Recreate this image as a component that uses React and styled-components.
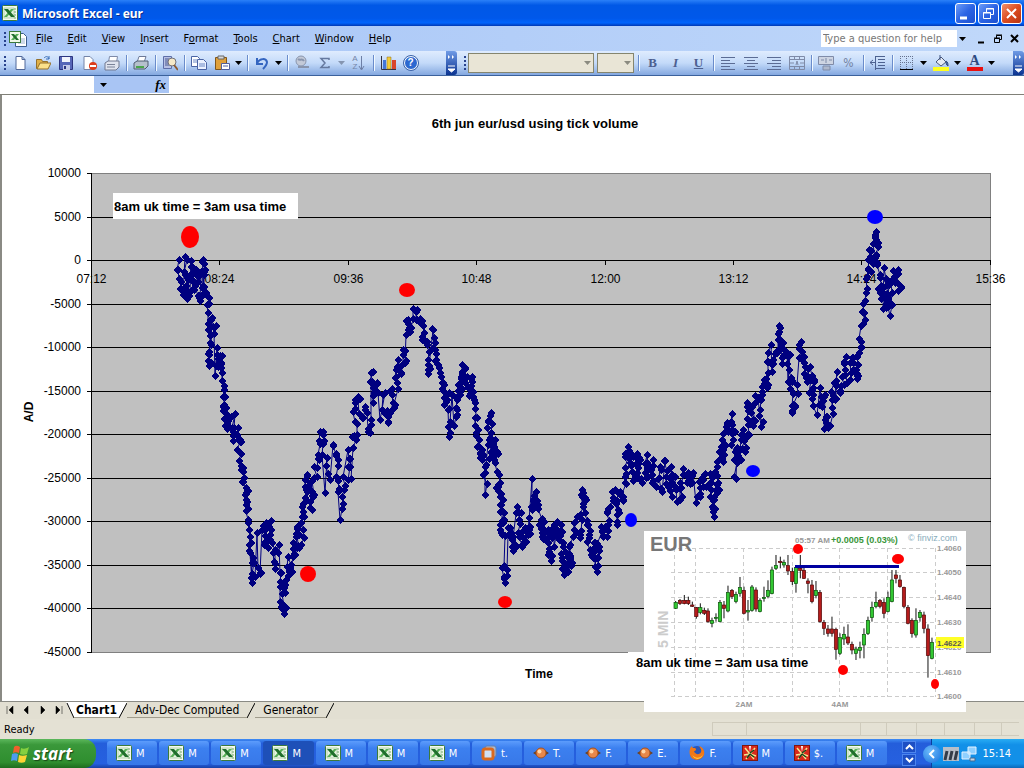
import React from "react";
import styled, { createGlobalStyle } from "styled-components";

const GlobalStyle = createGlobalStyle`
  * { box-sizing: border-box; }
  body {
    margin: 0;
    background: #fff;
    color: #000;
    font-family: "DejaVu Sans Condensed", "Noto Sans", sans-serif;
    font-size: 11px;
  }
  button, input, select { font: inherit; color: inherit; margin: 0; }
  button { padding: 0; border: none; background: none; }
`;

/* ---------- chart data ---------- */

const WAYPOINTS = [
  [179, 260], [179, 279], [181, 289], [183, 295], [185, 257], [185, 275], [187, 299], [188, 280],
  [191, 261], [190, 292], [193, 268], [194, 290], [196, 270], [198, 296], [200, 301], [201, 272],
  [203, 260], [202, 288], [205, 270], [203, 294], [207, 296], [207, 305], [208, 330], [209, 352], [209, 366],
  [211, 345], [212, 318], [213, 327], [214, 334], [215, 376], [217, 348], [218, 367], [220, 356],
  [221, 364], [222, 381], [223, 397], [224, 405], [226, 408], [226, 418], [227, 429], [231, 417],
  [233, 441], [235, 414], [234, 428], [237, 435], [239, 439], [238, 451], [241, 466], [242, 470],
  [243, 482], [246, 488], [245, 495], [247, 502], [246, 511], [248, 523], [249, 545], [250, 553],
  [252, 583], [253, 558], [255, 577], [257, 533], [258, 568], [260, 573], [262, 530], [264, 545],
  [266, 523], [268, 548], [271, 521], [270, 535], [272, 543], [275, 569], [275, 550], [279, 545],
  [280, 573], [282, 585], [281, 607], [284, 614], [285, 593], [286, 580], [288, 557], [289, 572],
  [292, 572], [293, 543], [293, 557], [296, 537], [297, 527], [299, 548], [303, 530], [302, 517],
  [302, 507], [305, 498], [305, 487], [307, 475], [310, 490], [312, 510], [313, 497], [314, 478],
  [317, 468], [318, 455], [320, 432], [323, 432], [322, 455], [325, 493], [327, 458], [330, 480],
  [333, 445], [336, 456], [336, 477], [338, 492], [340, 520], [342, 497], [343, 477], [348, 450],
  [348, 467], [351, 479], [353, 448], [354, 436], [355, 422], [355, 403], [360, 399], [362, 418],
  [365, 407], [368, 432], [371, 420], [371, 373], [372, 382], [373, 403], [377, 383], [378, 393],
  [380, 420], [385, 393], [384, 413], [388, 422], [390, 413], [392, 389], [394, 408], [397, 383],
  [396, 370], [398, 360], [401, 373], [403, 350], [405, 363], [406, 335], [408, 320], [410, 332],
  [413, 309], [417, 310], [416, 320], [420, 323], [422, 321], [422, 337], [426, 342], [429, 352],
  [428, 374], [429, 366], [433, 330], [435, 343], [436, 354], [438, 365], [440, 373], [442, 383],
  [443, 391], [444, 405], [447, 395], [448, 410], [449, 437], [450, 422], [452, 395], [454, 426],
  [456, 408], [457, 400], [458, 385], [460, 392], [461, 377], [463, 366], [462, 372], [465, 383],
  [467, 377], [469, 396], [472, 377], [473, 392], [475, 403], [475, 418], [476, 433], [479, 440],
  [480, 453], [482, 460], [482, 450], [485, 467], [485, 495], [485, 473], [488, 445], [488, 421],
  [490, 416], [491, 433], [489, 459], [493, 447], [495, 440], [493, 457], [497, 452], [497, 472],
  [498, 487], [498, 491], [503, 500], [500, 512], [500, 525], [504, 513], [501, 533], [505, 536],
  [504, 566], [505, 583], [507, 570], [508, 535], [510, 528], [512, 547], [515, 548], [513, 537],
  [517, 507], [519, 513], [518, 533], [522, 547], [525, 528], [526, 542], [529, 518], [528, 535],
  [532, 479], [532, 510], [536, 492], [535, 507], [538, 505], [541, 520], [542, 537], [544, 522],
  [545, 540], [548, 530], [549, 552], [551, 561], [552, 538], [554, 525], [554, 547], [557, 522],
  [559, 540], [561, 525], [563, 547], [562, 558], [564, 575], [567, 557], [568, 572], [569, 547],
  [572, 563], [573, 537], [577, 517], [576, 532], [580, 535], [580, 515], [583, 493], [585, 498],
  [585, 513], [587, 525], [589, 538], [591, 555], [593, 558], [594, 543], [597, 558], [597, 572],
  [599, 547], [601, 527], [603, 537], [605, 527], [607, 537], [607, 513], [610, 507], [612, 492],
  [615, 500], [617, 525], [618, 510], [620, 492], [623, 500], [625, 483], [625, 468], [628, 447],
  [627, 457], [633, 457], [630, 463], [633, 481], [637, 473], [635, 457], [639, 458], [642, 483],
  [645, 473], [647, 455], [648, 477], [653, 460], [652, 475], [656, 487], [660, 467], [662, 492],
  [665, 461], [666, 477], [668, 487], [671, 467], [672, 497], [675, 477], [677, 502], [680, 483],
  [681, 498], [683, 469], [687, 483], [688, 473], [692, 483], [693, 473], [696, 503], [700, 497],
  [702, 480], [704, 475], [706, 487], [710, 474], [710, 497], [712, 507], [714, 517], [714, 500],
  [716, 490], [718, 483], [717, 467], [720, 453], [721, 447], [723, 462], [725, 446], [724, 433],
  [727, 423], [728, 432], [732, 414], [732, 430], [733, 440], [734, 460], [736, 479], [737, 448],
  [740, 460], [741, 435], [743, 430], [745, 452], [747, 435], [747, 419], [747, 403], [751, 413],
  [753, 426], [755, 403], [758, 398], [761, 427], [760, 410], [762, 392], [764, 380], [767, 388],
  [768, 362], [771, 345], [772, 372], [773, 360], [776, 352], [778, 334], [779, 326], [780, 340],
  [782, 364], [783, 343], [787, 353], [788, 382], [790, 355], [789, 370], [792, 382], [793, 393],
  [792, 413], [795, 407], [797, 385], [799, 358], [801, 342], [802, 357], [805, 367], [807, 382],
  [810, 367], [809, 393], [814, 382], [813, 395], [817, 415], [820, 388], [822, 407], [825, 395],
  [824, 429], [827, 417], [830, 426], [832, 400], [834, 383], [835, 400], [837, 372], [840, 393],
  [842, 377], [846, 357], [847, 383], [850, 363], [853, 358], [853, 370], [857, 379], [858, 365],
  [859, 353], [861, 342], [863, 324], [864, 313], [866, 293], [867, 277], [871, 272], [868, 260],
  [871, 251], [873, 263], [876, 240], [876, 232], [878, 247], [877, 263], [880, 278], [881, 299],
  [883, 288], [884, 268], [883, 309], [886, 300], [888, 283], [888, 298], [890, 316], [892, 293],
  [893, 271], [895, 283], [898, 270], [899, 290], [901, 287],
];

// fill in the ticks between the turning points, with a small repeatable wobble
const buildSeries = (points) => {
  let seed = 7;
  const rand = () => {
    seed = (seed * 16807) % 2147483647;
    return seed / 2147483647 - 0.5;
  };
  const out = [points[0]];
  for (let i = 1; i < points.length; i++) {
    const [x0, y0] = points[i - 1];
    const [x1, y1] = points[i];
    if (Math.abs(y1 - y0) < 27) {
      [0.3, 0.7].forEach((t) => {
        out.push([
          Math.round(x0 + (x1 - x0) * t + rand() * 5),
          Math.round(y0 + (y1 - y0) * t + rand() * 10),
        ]);
      });
    }
    out.push([x1, y1]);
  }
  return out;
};

const SERIES = buildSeries(WAYPOINTS);
const LINE = SERIES.map((p) => p.join(",")).join(" ");
const MARKERS = SERIES.map(([x, y]) => `M${x - 4} ${y}l4 -4l4 4l-4 4z`).join("");

const Y_LABELS = [10000, 5000, 0, -5000, -10000, -15000, -20000, -25000, -30000, -35000, -40000, -45000];
const X_LABELS = ["07:12", "08:24", "09:36", "10:48", "12:00", "13:12", "14:24", "15:36"];
const yPos = (i) => Math.round(173 + i * 43.5) + 0.5;
const xPos = (i) => Math.round(91 + i * 128.4) + 0.5;

const DOTS = [
  [190, 237, 9, 11, "#f00"], [407, 290, 8, 7, "#f00"], [308, 574, 8, 8, "#f00"], [505, 602, 7, 6, "#f00"],
  [631, 520, 6, 7, "#00f"], [753, 471, 7, 6, "#00f"], [875, 217, 8, 7, "#00f"],
];

// x, high, low, body top, body bottom, rising
const CANDLES = [
  [152, 228, 252, 232, 250, 1], [165, 222, 240, 226, 236, 0], [178, 210, 238, 226, 236, 0], [190, 215, 240, 226, 236, 0],
  [202, 230, 246, 240, 244, 0], [214, 246, 281, 248, 275, 0], [226, 235, 268, 248, 262, 1], [238, 248, 270, 256, 265, 0],
  [249, 250, 293, 258, 290, 0], [261, 278, 307, 287, 295, 1], [273, 265, 290, 277, 280, 1], [285, 225, 292, 232, 290, 1],
  [297, 228, 280, 240, 250, 0], [309, 182, 262, 203, 258, 1], [321, 192, 222, 196, 215, 0], [333, 200, 235, 208, 230, 1],
  [345, 156, 215, 188, 205, 1], [357, 185, 268, 196, 265, 0], [369, 225, 287, 257, 261, 1], [381, 180, 260, 186, 256, 1],
  [393, 187, 260, 195, 252, 0], [405, 220, 262, 227, 260, 1], [417, 185, 230, 217, 221, 1], [429, 166, 220, 196, 214, 1],
  [441, 125, 208, 135, 206, 1], [453, 90, 135, 122, 130, 1], [466, 95, 130, 109, 113, 0], [477, 104, 128, 112, 120, 1],
  [489, 90, 150, 122, 138, 0], [502, 128, 180, 140, 170, 0], [513, 120, 203, 128, 176, 1], [526, 90, 160, 130, 136, 0],
  [537, 125, 162, 136, 160, 0], [549, 160, 205, 168, 175, 0], [561, 165, 235, 180, 230, 0], [573, 168, 220, 196, 212, 1],
  [585, 195, 293, 202, 290, 0], [597, 285, 330, 292, 310, 0], [609, 300, 335, 312, 325, 0], [621, 275, 335, 312, 325, 0],
  [633, 308, 404, 313, 373, 0], [645, 325, 390, 338, 385, 1], [657, 305, 360, 328, 342, 1], [669, 298, 360, 336, 354, 0],
  [681, 350, 388, 358, 375, 0], [693, 365, 405, 372, 385, 1], [705, 350, 400, 367, 376, 1], [717, 310, 400, 328, 360, 1],
  [729, 275, 330, 286, 326, 1], [741, 230, 290, 247, 278, 1], [753, 200, 250, 232, 245, 1], [765, 222, 250, 227, 244, 0],
  [777, 220, 280, 232, 265, 0], [789, 200, 262, 217, 260, 1], [801, 135, 232, 165, 230, 1], [813, 135, 175, 150, 160, 0],
  [825, 150, 188, 165, 185, 0], [837, 185, 250, 187, 244, 0], [849, 240, 298, 247, 295, 0], [861, 280, 338, 286, 326, 0],
  [873, 250, 338, 287, 330, 1], [885, 255, 290, 262, 278, 1], [897, 260, 325, 270, 310, 0], [909, 298, 458, 312, 392, 0],
  [921, 338, 403, 352, 400, 1],
];
const PRICES = [[17, "1.4060"], [41, "1.4050"], [66, "1.4640"], [91, "1.4630"], [116, "1.4620"], [141, "1.4610"], [165, "1.4600"]];

/* ---------- icons ---------- */

const ExcelIcon = ({ size = 16 }) => (
  <svg width={size} height={size} viewBox="0 0 16 16">
    <rect x="0.5" y="0.5" width="15" height="15" rx="1" fill="#f4faee" stroke="#3c7a3c" />
    <path d="M12 4h2M12 7h2M12 10h2M12 13h2" stroke="#6aa56a" />
    <rect x="2" y="3" width="10" height="10" fill="#e8f5e2" stroke="#8dbd8d" strokeWidth="0.6" />
    <path d="M12 4H9L2 12h3z" fill="#58b058" />
    <path d="M2 4h4l7 8H9z" fill="#1f6e2c" />
  </svg>
);
const WorkbookIcon = () => (
  <svg width="18" height="16" viewBox="0 0 18 16">
    <path d="M6.500 2.500h8l3 3v10h-11z" fill="#fff" stroke="#3c5c8c" />
    <path d="M9 8h7M9 10h7M9 12h7" stroke="#9cb0d0" />
    <rect x="0.500" y="0.500" width="11" height="11" fill="#eef8e8" stroke="#3c7a3c" />
    <path d="M10 3H7L2 9h3z" fill="#58b058" />
    <path d="M2 3h3l5 6H7z" fill="#1f6e2c" />
  </svg>
);
const OrangeSquare = () => (
  <svg width="16" height="16" viewBox="0 0 16 16">
    <rect x="4" y="1" width="11" height="11" rx="2" fill="#a9b9d2" stroke="#6880a8" />
    <rect x="2" y="4" width="10" height="10" rx="2" fill="#cfe0f5" stroke="#d96a20" strokeWidth="3" />
  </svg>
);
const OrangeBall = () => (
  <svg width="16" height="16" viewBox="0 0 16 16">
    <path d="M0 8l5-3v6zM16 8l-5-3v6z" fill="#684020" />
    <circle cx="8" cy="8" r="5" fill="#e8884a" stroke="#a8501c" />
    <circle cx="6.5" cy="6.5" r="2" fill="#ffd7a8" />
  </svg>
);
const Firefox = () => (
  <svg width="16" height="16" viewBox="0 0 16 16">
    <circle cx="8" cy="8" r="7" fill="#2a56b8" />
    <path d="M1 4c0-1 1-2 2-3 0 2 1 2 3 2 2 1 1 3-1 3 1 4 6 4 7 1 1-3-1-4-2-6 4 1 6 5 5 9-2 6-12 7-14 0-.6-2-.6-4 0-6z" fill="#f07818" />
    <path d="M3 9c2 5 9 5 11 0-1 6-9 7-11 0z" fill="#ffce40" />
  </svg>
);
const RedChart = () => (
  <svg width="16" height="16" viewBox="0 0 16 16">
    <rect x="0.5" y="0.5" width="15" height="15" fill="#d8281c" stroke="#7c1810" />
    <path d="M8 9L3 3M8 9l5-6M8 9L2 10M8 9l6 2M8 9l-4 5M8 9l4 5" stroke="#f4e890" strokeWidth="1.5" />
    <path d="M7 1l2 0-1 6z" fill="#fff" />
    <path d="M8 9l-3 4M8 9l4 3M8 8l4-3" stroke="#184018" strokeWidth="1.5" />
  </svg>
);
const TASK_ICONS = { x: ExcelIcon, s: OrangeSquare, b: OrangeBall, f: Firefox, r: RedChart };

const drawings = {
  new: <path d="M4 1.5h6l3 3v10H4zM10 1.5v3h3" fill="#fff" stroke="#51689a" />,
  open: (
    <>
      <path d="M1.5 13.5v-9h5l1 2h5v7z" fill="#e0b048" stroke="#94702c" />
      <path d="M2 14l3-6h11l-3 6z" fill="#fbe08a" stroke="#94702c" />
      <path d="M9 3c2-2 4-2 5 1M14 1v3h-3" fill="none" stroke="#3b6fb8" />
    </>
  ),
  save: (
    <>
      <path d="M1.5 1.5h13v13h-13z" fill="#5666b8" stroke="#2c3580" />
      <path d="M4 2h8v5H4z" fill="#f0f3fc" />
      <path d="M5 10h7v5H5z" fill="#c4cae8" />
      <path d="M6 11h2v3H6z" fill="#2c3580" />
    </>
  ),
  permission: (
    <>
      <path d="M3 1.5h6l3 3v10H3z" fill="#fff" stroke="#7484a8" />
      <circle cx="12" cy="11" r="4" fill="#dc3c1c" />
      <path d="M9 11h6" stroke="#fff" strokeWidth="2" />
    </>
  ),
  mail: (
    <>
      <path d="M5.500 1.500h8l-1 6h-8z" fill="#fff" stroke="#7e8aa8" />
      <path d="M1 8l3-2h11v6l-3 3H1z" fill="#dfe3ee" stroke="#707890" />
      <path d="M3 9.500h8M3 12h8" stroke="#7a8298" />
    </>
  ),
  print: (
    <>
      <path d="M6 1.500h7l-2 6H4z" fill="#fff" stroke="#6e7a98" />
      <path d="M1 8l3-2h11v5l-3 3H1z" fill="#b5c0cc" stroke="#4e5c70" />
      <path d="M3 11h8v2H3z" fill="#49a64c" />
    </>
  ),
  preview: (
    <>
      <path d="M1.500 1.500h8v12h-8z" fill="#b7c0e4" stroke="#5e6ea8" />
      <path d="M3 4h4M3 6h3M3 8h3M3 10h4" stroke="#4a5890" />
      <circle cx="10" cy="7" r="4" fill="#f6e9c8" stroke="#70727c" />
      <path d="M12 10l4 5" stroke="#8c5a30" strokeWidth="2" />
    </>
  ),
  copy: (
    <>
      <path d="M0.500 1.500h6l2 2v8h-8z" fill="#fff" stroke="#4a64a4" />
      <path d="M6.500 4.500h6l3 3v7h-9z" fill="#eaf1ff" stroke="#4a64a4" />
      <path d="M8 9h6M8 11h6M2 5h4M2 7h4" stroke="#6b88c4" />
    </>
  ),
  paste: (
    <>
      <path d="M1.500 2.500h11v12h-11z" fill="#dfa03a" stroke="#80561c" />
      <path d="M4 1h6v3H4z" fill="#d8d8d8" stroke="#666" />
      <path d="M7.500 8.500h8v6h-8z" fill="#fff" stroke="#5060a0" />
      <path d="M9 11h5" stroke="#5060a0" />
    </>
  ),
  undo: <path d="M3 3v6h6M3 8c3-5 9-5 10-1 0 3-2 5-4 7" fill="none" stroke="#3465c0" strokeWidth="2" />,
  link: (
    <>
      <circle cx="7" cy="6" r="5" fill="#c3cad8" stroke="#8995ad" />
      <path d="M4 12h5M8 12h7M4 4c2 2 4-1 6 2" stroke="#8995ad" strokeWidth="2" fill="none" />
    </>
  ),
  sum: <path d="M12 5V3.500H4l4 4.500-4 4.500h8V11" fill="none" stroke="#65799f" strokeWidth="1.500" />,
  chart: (
    <>
      <path d="M1.500 1v13.500H16" stroke="#334" fill="none" />
      <path d="M3 5h3v9H3z" fill="#4276d8" />
      <path d="M7 2h4v12H7z" fill="#f2cb38" stroke="#8a6818" strokeWidth="0.500" />
      <path d="M12 5h4v9h-4z" fill="#d8442c" />
    </>
  ),
  left: <path d="M1 2.500h14M1 5.500h9M1 8.500h14M1 11.500h9M1 14.500h14" stroke="#5b6c94" />,
  center: <path d="M1 2.500h14M4 5.500h8M1 8.500h14M4 11.500h8M1 14.500h14" stroke="#5b6c94" />,
  right: <path d="M1 2.500h14M6 5.500h9M1 8.500h14M6 11.500h9M1 14.500h14" stroke="#5b6c94" />,
  merge: <path d="M0.500 1.500h15v13h-15zM0.500 4.500h15M0.500 11.500h15M5.500 1.500v3M10.500 1.500v3M5.500 11.500v3M10.500 11.500v3M1 8h4M11 8h4M7 10l1-4 1 4" fill="none" stroke="#7f8ba8" />,
  currency: (
    <>
      <path d="M0.500 1.500h15v8h-15z" fill="#cdd4e2" stroke="#7f8ba8" />
      <path d="M3 5h3M8 3v5M11 5h3M5 11h7v4H5z" stroke="#7f8ba8" fill="#aeb8cc" />
    </>
  ),
  indent: <path d="M5 1.500h10M8 4.500h7M8 7.500h7M8 10.500h7M5 13.500h10M6 7.500H0M3 5L0 7.500 3 10M5.500 1v14" stroke="#4d6290" fill="none" />,
  borders: (
    <>
      <path d="M1.500 1v13M7.500 1v13M13.500 1v13M1 1.500h13M1 7.500h13" stroke="#65728f" strokeDasharray="1 1" />
      <path d="M1 14.500h13" stroke="#000" />
    </>
  ),
  fill: (
    <>
      <path d="M3 7l5-5 5 5-5 4z" fill="#e6ebf4" stroke="#4c5b7c" />
      <path d="M7 5V0M13 6c2 1 2 3 2 5-2-1-2-3-2-5z" fill="#3565b4" stroke="#3a5080" />
      <path d="M0 12h16v4H0z" fill="#ffff20" />
    </>
  ),
};

const Icon = ({ name }) => (
  <svg width="16" height="16" viewBox="0 0 16 16">{drawings[name]}</svg>
);
const Caret = ({ color = "#000" }) => (
  <svg width="7" height="4" viewBox="0 0 7 4"><path d="M0 0h7L3.500 4z" fill={color} /></svg>
);
const WindowsFlag = () => (
  <svg width="20" height="18" viewBox="0 0 20 18">
    <path d="M4 2c2-2 4-1 6 0L9 8C7 7 5 7 3 8z" fill="#f0602c" />
    <path d="M11 3c2 1 5 1 8-1l-2 7c-2 1-5 1-7 0z" fill="#86d040" />
    <path d="M2 9c2-1 4-1 6 0l-1 7c-2-1-4-1-6 0z" fill="#4c9cf0" />
    <path d="M9 10c2 1 5 1 8 0l-2 7c-2 1-5 1-7 0z" fill="#fcd434" />
  </svg>
);

/* ---------- toolbar pieces ---------- */

const Tool = ({ name, label, children }) => (
  <ToolButton type="button" aria-label={label || name}>
    {children || <Icon name={name} />}
  </ToolButton>
);
const DropArrow = ({ color }) => (
  <ArrowButton type="button" aria-label="More options"><Caret color={color} /></ArrowButton>
);
const More = () => (
  <Overflow type="button" aria-label="Toolbar options">
    <svg width="9" height="23" viewBox="0 0 9 23">
      <path d="M1 4l2 2-2 2zM5 4l2 2-2 2z" fill="#fff" />
      <path d="M1 15h7M1 18h7l-3.500 3z" stroke="#fff" fill="#fff" />
    </svg>
  </Overflow>
);

const MENUS = ["File", "Edit", "View", "Insert", "Format", "Tools", "Chart", "Window", "Help"];
const ACCEL = { Format: 1 };

const TASKS = [
  ["x", "M"], ["x", "M"], ["x", "M"], ["x", "M", true], ["x", "M"], ["x", "M"], ["x", "M"], ["s", "t."],
  ["b", "T."], ["b", "F."], ["b", "E."], ["f", "F."], ["r", "M"], ["r", "$."], ["x", "M"],
];

const MainChart = () => (
  <ChartSvg viewBox="2 95 1022 606" role="img" aria-label="6th jun eur/usd using tick volume">
    <text x="535" y="128" className="bold" textAnchor="middle">6th jun eur/usd using tick volume</text>
    <rect x="91.500" y="173.500" width="899" height="479" fill="#c0c0c0" stroke="#808080" />
    {Y_LABELS.map((v, i) => (
      <g key={v}>
        <path d={`M87 ${yPos(i)}H${i === 0 || i === 11 ? 92 : 991}`} stroke="#000" />
        <text x="81" y={yPos(i) + 3.5} textAnchor="end">{v}</text>
      </g>
    ))}
    <path d="M91.500 173V653" stroke="#000" />
    {X_LABELS.map((t, i) => (
      <g key={t}>
        <path d={`M${xPos(i)} 261v4`} stroke="#000" />
        <text x={xPos(i)} y="283" textAnchor="middle">{t}</text>
      </g>
    ))}
    <polyline points={LINE} fill="none" stroke="#000080" />
    <path d={MARKERS} fill="#000080" shapeRendering="crispEdges" />
    <rect x="113" y="193" width="185" height="26" fill="#fff" />
    <text x="114" y="211" className="bold">8am uk time = 3am usa time</text>
    {DOTS.map(([x, y, rx, ry, fill]) => (
      <ellipse key={x} cx={x} cy={y} rx={rx} ry={ry} fill={fill} />
    ))}
    <text x="539" y="678" className="axis" textAnchor="middle">Time</text>
    <text transform="translate(33 412) rotate(-90)" className="axis" textAnchor="middle">A/D</text>
  </ChartSvg>
);

const QuoteChart = () => (
  <InsetSvg viewBox="0 0 322 181" role="img" aria-label="EUR 5 minute candles">
    <rect x="-16" y="121" width="190" height="24" fill="#fff" />
    <rect width="322" height="181" fill="#fff" />
    <g stroke="#ccc" strokeDasharray="4 3" fill="none">
      {PRICES.map(([y]) => <path key={y} d={`M27 ${y + 0.5}H291`} />)}
      {[31, 52, 100, 149, 196, 244, 292].map((x) => <path key={x} d={`M${x - 0.5} 17V166`} />)}
    </g>
    <text x="6" y="20" className="pair">EUR</text>
    <text transform="translate(24 117) rotate(-90)" className="period">5 MIN</text>
    <text x="151" y="12" className="price">05:57 AM</text>
    <text x="187" y="12" className="gain">+0.0005 (0.03%)</text>
    <text x="264" y="10" className="source">© finviz.com</text>
    {PRICES.map(([y, t]) => <text key={t} x="293" y={y + 3} className="price">{t}</text>)}
    <rect x="292" y="106" width="28" height="11" fill="#ffff28" />
    <text x="293" y="115" className="last">1.4622</text>
    <text x="100" y="176" textAnchor="middle" className="price">2AM</text>
    <text x="196" y="176" textAnchor="middle" className="price">4AM</text>
    <g transform="translate(-19 -6) scale(0.3333)">
      {CANDLES.map(([x, high, low, top, bottom, up]) => (
        <g key={x}>
          <path d={`M${x} ${high}V${low}`} stroke="#111" strokeWidth="3" />
          <rect x={x - 5} y={top} width="10" height={bottom - top} fill={up ? "#32c832" : "#b41c1c"} stroke={up ? "#0a500a" : "#500808"} strokeWidth="2" />
        </g>
      ))}
    </g>
    <path d="M151 35.500H255" stroke="#0000a0" strokeWidth="3" />
    <g fill="#f00">
      <ellipse cx="154" cy="18" rx="5" ry="5" />
      <ellipse cx="254" cy="28" rx="6" ry="5" />
      <ellipse cx="199" cy="139" rx="5" ry="5" />
      <ellipse cx="291" cy="153" rx="4" ry="5" />
    </g>
    <text x="-8" y="136" className="bold">8am uk time = 3am usa time</text>
  </InsetSvg>
);

const App = () => (
  <>
    <GlobalStyle />
    <Screen>
      <TitleBar>
        <ExcelIcon />
        <WindowTitle>Microsoft Excel - eur</WindowTitle>
        <CaptionButton type="button" aria-label="Minimize">
          <svg width="19" height="19"><path d="M4 14h7" stroke="#fff" strokeWidth="3" /></svg>
        </CaptionButton>
        <CaptionButton type="button" aria-label="Restore">
          <svg width="19" height="19"><path d="M7.500 8V4.500h7v6H12M4.500 8.500h7v6h-7zM4 9h8M7 5h8" stroke="#fff" fill="none" /></svg>
        </CaptionButton>
        <CaptionButton type="button" aria-label="Close" $close>
          <svg width="19" height="19"><path d="M5 5l9 9M14 5l-9 9" stroke="#fff" strokeWidth="2" /></svg>
        </CaptionButton>
      </TitleBar>

      <MenuBar>
        <Grip />
        <DocIcon><WorkbookIcon /></DocIcon>
        {MENUS.map((m) => {
          const at = ACCEL[m] || 0;
          return (
            <MenuItem key={m} type="button">
              {m.slice(0, at)}<u>{m[at]}</u>{m.slice(at + 1)}
            </MenuItem>
          );
        })}
        <HelpBox>
          <HelpInput type="text" aria-label="Help" placeholder="Type a question for help" />
          <DropArrow />
        </HelpBox>
        <DocButton type="button" aria-label="Minimize workbook">
          <svg width="10" height="10"><path d="M2 8.500h6" stroke="#000" strokeWidth="2" /></svg>
        </DocButton>
        <DocButton type="button" aria-label="Restore workbook">
          <svg width="10" height="10"><path d="M3.500 4V1.500h5v4H7M1.500 4.500h5v4h-5zM3 1h6M1 4h6" stroke="#000" fill="none" /></svg>
        </DocButton>
        <DocButton type="button" aria-label="Close workbook">
          <svg width="10" height="10"><path d="M1 1l7 7M8 1L1 8" stroke="#000" strokeWidth="2" /></svg>
        </DocButton>
      </MenuBar>

      <ToolRow>
        <StandardBar>
          <Grip />
          <Tool name="new" /><Tool name="open" /><Tool name="save" /><Tool name="permission" /><Tool name="mail" />
          <Separator />
          <Tool name="print" />
          <Separator />
          <Tool name="preview" />
          <Separator />
          <Tool name="copy" /><Tool name="paste" /><DropArrow />
          <Separator />
          <Tool name="undo" /><DropArrow />
          <Separator />
          <Tool name="link" /><Tool name="sum" /><DropArrow color="#8595b0" />
          <Tool label="Sort ascending">
            <SortLetters><span>A</span><span>Z</span></SortLetters>
            <svg width="7" height="16"><path d="M3.500 1v13M1 11l2.500 4L6 11" stroke="#6d7fa5" fill="none" /></svg>
          </Tool>
          <Separator />
          <Tool name="chart" />
          <Tool label="Help"><HelpMark>?</HelpMark></Tool>
          <Push />
          <More />
        </StandardBar>
        <FormatBar>
          <Grip />
          <Combo $width={126}><select aria-label="Font" disabled /><Caret color="#8b8b80" /></Combo>
          <Combo $width={37}><select aria-label="Font size" disabled /><Caret color="#8b8b80" /></Combo>
          <Separator />
          <Tool label="Bold"><Letter>B</Letter></Tool>
          <Tool label="Italic"><Letter $italic>I</Letter></Tool>
          <Tool label="Underline"><Letter $underline>U</Letter></Tool>
          <Separator />
          <Tool name="left" /><Tool name="center" /><Tool name="right" /><Tool name="merge" />
          <Separator />
          <Tool name="currency" />
          <Tool label="Percent"><Percent>%</Percent></Tool>
          <Separator />
          <Tool name="indent" />
          <Separator />
          <Tool name="borders" /><DropArrow />
          <Tool name="fill" /><DropArrow />
          <Tool label="Font colour"><FontColour>A</FontColour></Tool><DropArrow />
          <Push />
          <More />
        </FormatBar>
      </ToolRow>

      <FormulaBar>
        <NameBox type="text" aria-label="Name box" />
        <FormulaTools>
          <DropArrow />
          <Fx type="button">fx</Fx>
        </FormulaTools>
        <FormulaInput type="text" aria-label="Formula" />
      </FormulaBar>

      <ChartSheet>
        <MainChart />
        <QuoteChart />
      </ChartSheet>

      <SheetTabs>
        {["M1 1v8M7 1v8L3 5z", "M6 1v8L2 5z", "M3 1v8l4-4z", "M2 1v8l4-4zM8 1v8"].map((d) => (
          <NavButton key={d} type="button" aria-label="Scroll sheets">
            <svg width="9" height="10"><path d={d} fill="#000" stroke="#000" strokeWidth="0.500" /></svg>
          </NavButton>
        ))}
        <Slash width="8" height="16"><path d="M0 0l8 16V0z" fill="#fff" /><path d="M1 1l7 15" stroke="#000" /></Slash>
        <SheetTab type="button" $active>Chart1</SheetTab>
        <Slash width="8" height="16"><path d="M0 0v16L8 0z" fill="#fff" /><path d="M0 16L8 1" stroke="#000" /></Slash>
        <SheetTab type="button">Adv-Dec Computed</SheetTab>
        <Slash width="8" height="16"><path d="M0 16L8 1" stroke="#000" /></Slash>
        <SheetTab type="button">Generator</SheetTab>
        <Slash width="8" height="16"><path d="M0 16L8 1" stroke="#000" /></Slash>
      </SheetTabs>

      <StatusBar>
        <span>Ready</span>
        <Push />
        {[34, 114, 26, 30, 28, 30, 27, 18].map((w, i) => <Pane key={i} $width={w} />)}
      </StatusBar>

      <Taskbar>
        <StartButton type="button"><WindowsFlag />start</StartButton>
        <TaskList>
          {TASKS.map(([kind, label, active], i) => {
            const Glyph = TASK_ICONS[kind];
            return <TaskButton key={i} type="button" $active={active}><Glyph />{label}</TaskButton>;
          })}
        </TaskList>
        <Scroller>
          <ScrollButton type="button" aria-label="Up"><svg width="9" height="6"><path d="M1 5l3.500-3.500L8 5" stroke="#fff" strokeWidth="2" fill="none" /></svg></ScrollButton>
          <ScrollButton type="button" aria-label="Down"><svg width="9" height="6"><path d="M1 1l3.500 3.500L8 1" stroke="#fff" strokeWidth="2" fill="none" /></svg></ScrollButton>
        </Scroller>
        <Tray>
          <TrayToggle type="button" aria-label="Show hidden icons">
            <svg width="8" height="10"><path d="M6 1L2 5l4 4" stroke="#fff" strokeWidth="2" fill="none" /></svg>
          </TrayToggle>
          <svg width="16" height="16">
            <rect y="1" width="16" height="14" fill="#b9bfc8" />
            <path d="M2 14l2-9M7 14l2-9M12 14l2-9" stroke="#333c48" strokeWidth="3" />
          </svg>
          <svg width="16" height="16">
            <path d="M7 1h8v7H7zM1 6h8v7H1z" fill="#8fd0ff" stroke="#e4f2ff" />
            <path d="M9 12h5v3H9z" fill="#c8d4e0" stroke="#436a94" />
          </svg>
          <Clock>15:14</Clock>
        </Tray>
      </Taskbar>
    </Screen>
  </>
);

export default App;

/* ---------- window frame ---------- */

const Screen = styled.div`
  display: flex;
  flex-direction: column;
  min-height: 100vh;
`;

const TitleBar = styled.header`
  display: flex;
  align-items: center;
  gap: 2px;
  height: 26px;
  padding: 0 2px;
  background: linear-gradient(#2a80f8, #0058e6 20%, #0058ea 70%, #0064fc 88%, #0038b4);
`;

const WindowTitle = styled.h1`
  flex: 1;
  margin: 0 0 0 2px;
  color: #fff;
  font-family: "Noto Sans", sans-serif;
  font-size: 12px;
  font-weight: 700;
  text-shadow: 1px 1px #0a2f8c;
`;

const CaptionButton = styled.button`
  display: flex;
  width: 21px;
  height: 21px;
  border: 1px solid #fff;
  border-radius: 3px;
  background: ${({ $close }) =>
    $close ? "linear-gradient(135deg, #f0906c, #dc4c20 50%, #b83410)" : "linear-gradient(135deg, #6c9cf8, #2c64e4 50%, #1c50d0)"};
`;

const MenuBar = styled.nav`
  display: flex;
  align-items: center;
  height: 25px;
  padding: 0 1px 0 4px;
  background: linear-gradient(90deg, #a6c4f6, #c0d8fa);
`;

const Grip = styled.span`
  flex: none;
  width: 4px;
  height: 14px;
  border-left: 2px dotted #27418c;
`;

const DocIcon = styled.span`
  display: flex;
  width: 21px;
  padding-left: 1px;
`;

const MenuItem = styled.button`
  height: 20px;
  padding: 0 8px 0 7px;
  &:hover { background: #ffeec2; }
`;

const HelpBox = styled.div`
  display: flex;
  width: 147px;
  height: 17px;
  margin: 0 4px 0 auto;
`;

const HelpInput = styled.input`
  flex: 1;
  min-width: 0;
  padding: 0 2px;
  border: none;
  background: #fff;
  &::placeholder { color: #777; opacity: 1; }
`;

const DocButton = styled.button`
  display: flex;
  align-items: center;
  justify-content: center;
  width: 17px;
  height: 16px;
`;

/* ---------- toolbars ---------- */

const ToolRow = styled.div`
  display: flex;
  height: 25px;
  background: #b4cff6;
`;

const StandardBar = styled.div`
  display: flex;
  flex: none;
  align-items: center;
  width: 457px;
  padding-left: 4px;
  border-bottom: 1px solid #3b619c;
  background: linear-gradient(#dfecfe, #c3daf9 50%, #84a8e0);
`;

const FormatBar = styled(StandardBar)`
  flex: 1;
  width: auto;
  padding-left: 7px;
`;

const ToolButton = styled.button`
  display: flex;
  flex: none;
  align-items: center;
  justify-content: center;
  width: 23px;
  height: 22px;
  &:hover { background: #ffe1a0; }
`;

const ArrowButton = styled.button`
  display: flex;
  flex: none;
  align-items: center;
  justify-content: center;
  width: 11px;
  height: 100%;
`;

const Separator = styled.span`
  flex: none;
  width: 2px;
  height: 16px;
  margin: 0 1px 0 3px;
  border-left: 1px solid #6a8ccb;
  border-right: 1px solid #f1f9ff;
`;

const Push = styled.span`
  flex: 1;
`;

const Overflow = styled.button`
  display: flex;
  flex: none;
  width: 11px;
  height: 24px;
  padding-left: 1px;
  border-radius: 0 3px 3px 0;
  background: linear-gradient(#6f9be6, #0a3290);
`;

const Combo = styled.div`
  display: flex;
  flex: none;
  align-items: center;
  width: ${({ $width }) => $width}px;
  height: 20px;
  margin: 0 3px 0 0;
  padding-right: 2px;
  border: 1px solid #85856e;
  background: #e9e5d6;
  & + & { margin-right: 1px; }

  select {
    flex: 1;
    min-width: 0;
    appearance: none;
    border: none;
    background: none;
  }
`;

const Letter = styled.span`
  color: #4c6090;
  font: ${({ $italic }) => ($italic ? "italic 700" : "700")} 13px "Liberation Serif", serif;
  text-decoration: ${({ $underline }) => ($underline ? "underline" : "none")};
`;

const Percent = styled.span`
  color: #71809f;
  font-size: 12px;
`;

const SortLetters = styled.span`
  display: flex;
  flex-direction: column;
  color: #7485a8;
  font: 8px/8px "Liberation Sans", sans-serif;
`;

const HelpMark = styled.span`
  width: 14px;
  height: 14px;
  border: 1px solid #fff;
  border-radius: 50%;
  outline: 1px solid #3a62a8;
  background: #2c68d0;
  color: #fff;
  font: 700 10px/12px "Liberation Sans", sans-serif;
`;

const FontColour = styled.span`
  width: 16px;
  height: 16px;
  border-bottom: 4px solid #e81010;
  color: #2d4a80;
  font: 700 14px/12px "Liberation Serif", serif;
`;

const FormulaBar = styled.div`
  display: flex;
  height: 19px;
  padding: 0 2px 1px;
  border-bottom: 1px solid #808078;
  background: #fff;
`;

const NameBox = styled.input`
  width: 92px;
  min-width: 0;
  padding: 0 2px;
  border: none;
  background: #fff;
`;

const FormulaTools = styled.div`
  display: flex;
  justify-content: space-between;
  width: 75px;
  padding: 0 3px 0 4px;
  background: #a9c5f4;
`;

const Fx = styled.button`
  font: italic 700 13px "Liberation Serif", serif;
`;

const FormulaInput = styled.input`
  flex: 1;
  min-width: 0;
  border: none;
  background: #fff;
`;

/* ---------- chart sheet ---------- */

const ChartSheet = styled.main`
  position: relative;
  display: flex;
  flex: 1;
  border-left: 2px solid #8a8a84;
  border-bottom: 1px solid #8a8a84;
  background: #fff;
`;

const ChartSvg = styled.svg`
  display: block;
  width: 100%;
  font-family: "Liberation Sans", Arial, sans-serif;
  font-size: 12px;

  .bold { font-size: 13px; font-weight: 700; }
  .axis { font-size: 12px; font-weight: 700; }
`;

// pasted picture that hangs over the bottom edge of the sheet
const InsetSvg = styled.svg`
  position: absolute;
  right: 58px;
  bottom: -11px;
  width: 322px;
  height: 181px;
  overflow: visible;
  font-family: "Liberation Sans", Arial, sans-serif;

  .bold { font-size: 13px; font-weight: 700; }
  .pair { font-size: 20px; font-weight: 700; fill: #777; }
  .period { font-size: 14px; font-weight: 700; fill: #ccc; }
  .price { font-size: 8px; font-weight: 700; fill: #999; }
  .last { font-size: 8px; font-weight: 700; fill: #555; }
  .gain { font-size: 9px; font-weight: 700; fill: #3a963a; }
  .source { font-size: 9px; fill: #88acbc; }
`;

/* ---------- sheet tabs and status ---------- */

const SheetTabs = styled.nav`
  display: flex;
  height: 17px;
  padding-left: 2px;
  background: #e2dfd2;
`;

const NavButton = styled.button`
  display: flex;
  align-items: center;
  justify-content: center;
  width: 16px;
  height: 15px;
`;

const Slash = styled.svg`
  flex: none;
`;

const SheetTab = styled.button`
  height: 16px;
  padding: 0 ${({ $active }) => ($active ? "2px" : "8px")};
  border-bottom: 1px solid #a09c8c;
  background: ${({ $active }) => ($active ? "#fff" : "transparent")};
  font-size: 12px;
  line-height: 14px;
  font-weight: ${({ $active }) => ($active ? 700 : 400)};
`;

const StatusBar = styled.footer`
  display: flex;
  align-items: center;
  height: 20px;
  padding: 0 5px 0 4px;
  background: #e4e1d4;
`;

const Pane = styled.span`
  width: ${({ $width }) => $width}px;
  height: 14px;
  border: 1px solid #cfcbbc;
  border-right: none;
`;

/* ---------- taskbar ---------- */

const Taskbar = styled.footer`
  display: flex;
  height: 29px;
  color: #fff;
  background: linear-gradient(#3f8cf4, #245edb 15%, #2660e0 85%, #1941a5);
`;

const StartButton = styled.button`
  display: flex;
  align-items: center;
  gap: 3px;
  width: 96px;
  padding-left: 10px;
  border-radius: 0 12px 12px 0;
  background: linear-gradient(#5cb85c, #3a983a 20%, #2f8e2f 80%, #1e6c1e);
  color: #fff;
  font: italic 700 17px/26px "Open Sans", sans-serif;
  text-shadow: 1px 1px 1px #174717;
`;

const TaskList = styled.div`
  display: grid;
  flex: 1;
  grid-template-columns: repeat(15, 1fr);
  gap: 2px;
  padding: 2px 0 3px 11px;
`;

const TaskButton = styled.button`
  display: flex;
  align-items: center;
  gap: 4px;
  min-width: 0;
  padding-left: 9px;
  border-radius: 3px;
  background: ${({ $active }) => ($active ? "#1e50b8" : "linear-gradient(#5c9cfc, #3c80f0 30%, #3878e8)")};
  color: #fff;
`;

const Scroller = styled.div`
  display: flex;
  flex-direction: column;
  align-items: center;
  justify-content: center;
  gap: 1px;
  width: 44px;
`;

const ScrollButton = styled.button`
  display: flex;
  align-items: center;
  justify-content: center;
  width: 14px;
  height: 12px;
  border: 1px solid #4d86ee;
  background: #1d4fc4;
`;

const Tray = styled.div`
  display: flex;
  align-items: center;
  gap: 2px;
  width: 93px;
  border-left: 1px solid #0c3f9c;
  background: linear-gradient(#28acf4, #1290e8 20%, #1290e8 85%, #0c68b8);
`;

const TrayToggle = styled.button`
  display: flex;
  flex: none;
  align-items: center;
  justify-content: center;
  width: 18px;
  height: 18px;
  margin-left: -9px;
  border-radius: 50%;
  background: radial-gradient(circle at 40% 35%, #6cbcfc, #1870dc);
`;

const Clock = styled.time`
  margin-left: auto;
  padding-right: 13px;
`;
